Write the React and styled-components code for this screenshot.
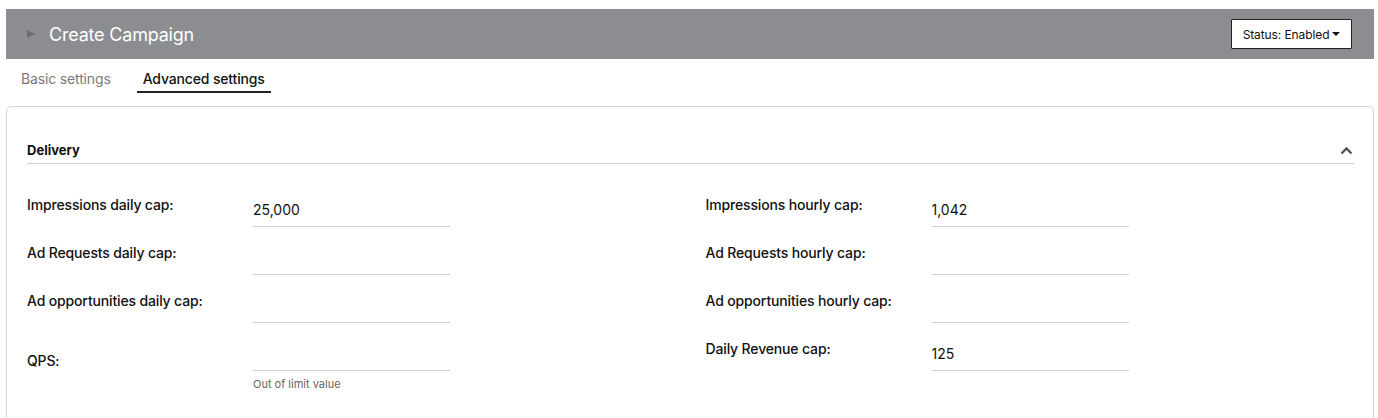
import styled, { createGlobalStyle } from 'styled-components';

const GlobalStyle = createGlobalStyle`
  html, body {
    margin: 0;
    padding: 0;
    background: #fff;
    font-family: Inter, "Noto Sans", "Liberation Sans", sans-serif;
    color: #1a1a1a;
  }
  * { box-sizing: border-box; }
`;

const Page = styled.div`
  padding: 9px 4px 0 6px;
`;

const Header = styled.header`
  height: 50px;
  background: #8b8d91;
  display: flex;
  align-items: center;
  justify-content: space-between;
  padding: 0 22px 0 21px;
`;

const TitleGroup = styled.div`
  display: flex;
  align-items: center;
  gap: 14px;
`;

const Arrow = styled.span`
  width: 0;
  height: 0;
  border-top: 4px solid transparent;
  border-bottom: 4px solid transparent;
  border-left: 8px solid #6c6d70;
`;

const Title = styled.h1`
  margin: 0;
  font-size: 18px;
  font-weight: 400;
  color: #fff;
  letter-spacing: -0.2px;
`;

const StatusButton = styled.button`
  height: 30px;
  width: 121px;
  background: #fff;
  border: 1px solid #222;
  border-radius: 1px;
  font-family: inherit;
  font-size: 12px;
  letter-spacing: -0.1px;
  color: #111;
  display: flex;
  align-items: center;
  justify-content: center;
  gap: 3px;
  padding: 0;
  cursor: pointer;
`;

const Caret = styled.span`
  width: 0;
  height: 0;
  border-left: 4px solid transparent;
  border-right: 4px solid transparent;
  border-top: 4px solid #111;
`;

const Tabs = styled.nav`
  height: 47px;
  display: flex;
  align-items: flex-start;
  gap: 20px;
  padding: 10px 0 0 9px;
`;

const Tab = styled.div`
  padding: 1px 6px 4px;
  font-size: 14px;
  line-height: 17px;
  letter-spacing: -0.15px;
  color: ${p => (p.$active ? '#111' : '#7a7a7a')};
  font-weight: ${p => (p.$active ? 500 : 400)};
  border-bottom: 2px solid ${p => (p.$active ? '#222' : 'transparent')};
`;

const Card = styled.section`
  border: 1px solid #d4d4d4;
  border-radius: 5px;
  padding: 28px 19px 40px 20px;
  min-height: 320px;
`;

const SectionHead = styled.div`
  display: flex;
  align-items: center;
  justify-content: space-between;
  border-bottom: 1px solid #cfcfcf;
  padding: 7px 0 5px;
`;

const SectionTitle = styled.h2`
  margin: 0;
  font-size: 13px;
  font-weight: 700;
  color: #111;
`;

const Grid = styled.div`
  display: grid;
  grid-template-columns: 1fr 1fr;
  column-gap: 30px;
  row-gap: 8px;
  margin-top: 23px;
`;

const Row = styled.div`
  display: grid;
  grid-template-columns: 226px 197px;
  align-items: ${p => (p.$centered ? 'center' : 'start')};
`;

const Label = styled.label`
  font-size: 14px;
  line-height: 20px;
  font-weight: 500;
  letter-spacing: -0.15px;
  color: #111;
  margin-top: ${p => (p.$centered ? '0' : '8px')};
`;

const FieldBox = styled.div`
  display: flex;
  flex-direction: column;
`;

const Input = styled.input`
  height: 40px;
  width: 100%;
  border: none;
  border-bottom: 1px solid #cdcdcd;
  padding: 10px 0 4px;
  font-family: inherit;
  font-size: 14px;
  color: #111;
  background: transparent;
  outline: none;
`;

const Hint = styled.span`
  font-size: 11px;
  color: #666;
  margin-top: 6px;
`;

const left = [
  { label: 'Impressions daily cap:', value: '25,000' },
  { label: 'Ad Requests daily cap:', value: '' },
  { label: 'Ad opportunities daily cap:', value: '' },
  { label: 'QPS:', value: '', hint: 'Out of limit value' },
];

const right = [
  { label: 'Impressions hourly cap:', value: '1,042' },
  { label: 'Ad Requests hourly cap:', value: '' },
  { label: 'Ad opportunities hourly cap:', value: '' },
  { label: 'Daily Revenue cap:', value: '125' },
];

function Field({ label, value, hint }) {
  return (
    <Row $centered={!!hint}>
      <Label $centered={!!hint}>{label}</Label>
      <FieldBox>
        <Input defaultValue={value} />
        {hint && <Hint>{hint}</Hint>}
      </FieldBox>
    </Row>
  );
}

export default function App() {
  const rows = [];
  left.forEach((f, i) => {
    rows.push(<Field key={'l' + i} {...f} />);
    rows.push(<Field key={'r' + i} {...right[i]} />);
  });

  return (
    <>
      <GlobalStyle />
      <Page>
        <Header>
          <TitleGroup>
            <Arrow />
            <Title>Create Campaign</Title>
          </TitleGroup>
          <StatusButton>
            Status: Enabled <Caret />
          </StatusButton>
        </Header>
        <Tabs>
          <Tab>Basic settings</Tab>
          <Tab $active>Advanced settings</Tab>
        </Tabs>
        <Card>
          <SectionHead>
            <SectionTitle>Delivery</SectionTitle>
            <svg width="13" height="9" viewBox="0 0 13 9" style={{ marginRight: 1 }}>
              <polyline points="1.5,7.5 6.5,2.5 11.5,7.5" fill="none" stroke="#555" strokeWidth="2.4" />
            </svg>
          </SectionHead>
          <Grid>{rows}</Grid>
        </Card>
      </Page>
    </>
  );
}
